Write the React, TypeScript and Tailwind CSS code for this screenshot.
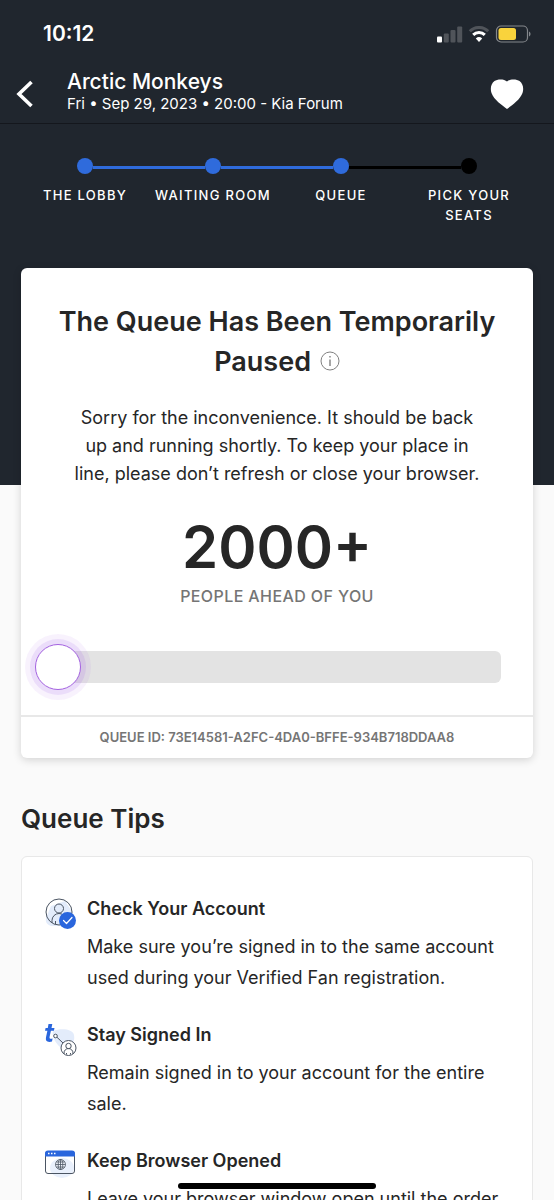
import type { ReactNode } from "react";

type Step = { label: string; done: boolean };

const steps: Step[] = [
  { label: "The Lobby", done: true },
  { label: "Waiting Room", done: true },
  { label: "Queue", done: true },
  { label: "Pick Your Seats", done: false },
];

const tips: { title: string; text: string; icon: ReactNode }[] = [
  {
    title: "Check Your Account",
    text: "Make sure you’re signed in to the same account used during your Verified Fan registration.",
    icon: <AccountIcon />,
  },
  {
    title: "Stay Signed In",
    text: "Remain signed in to your account for the entire sale.",
    icon: <SignedInIcon />,
  },
  {
    title: "Keep Browser Opened",
    text: "Leave your browser window open until the order",
    icon: <BrowserIcon />,
  },
];

function AccountIcon() {
  return (
    <svg viewBox="0 0 32 32" className="w-8 h-8" fill="none" aria-hidden="true">
      <path d="M1 20 6 8l14-5 8 12-10 13H6c-3-1-6-3-5-8z" fill="#e3ecfb" />
      <circle cx="14" cy="14" r="13" stroke="#4b5563" />
      <circle cx="14" cy="10.5" r="4.5" stroke="#4b5563" />
      <path d="M7 25v-2.500a7 7 0 0 1 14 0V25M10.500 26v-3" stroke="#4b5563" />
      <circle cx="22.500" cy="22.500" r="8.500" fill="#2a66dd" />
      <path d="m18.500 22.500 3 3 5.500-6" stroke="#fff" strokeWidth="1.200" strokeLinecap="round" strokeLinejoin="round" />
    </svg>
  );
}

function SignedInIcon() {
  return (
    <svg viewBox="0 0 32 32" className="w-8 h-8" fill="none" aria-hidden="true">
      <path d="M8 7c8-3 20-2 21 4 1 5-1 8-3 12l-9 1C12 22 6 12 8 7z" fill="#e3ecfb" />
      <path
        d="M3.500 0h3.800l-.8 4h3l-.6 2.800h-3l-1.300 6c-.3 1.500.2 2 1.300 2 .6 0 1.200-.1 1.700-.3l-.6 3c-.8.300-1.700.400-2.600.400-3 0-4-1.700-3.400-4.600l1.400-6.500H0L.6 4h2.200z"
        fill="#2a66dd"
      />
      <circle cx="10.500" cy="12" r="1.800" fill="#fff" stroke="#4b5563" />
      <path d="m12 13.300 6 5.700" stroke="#4b5563" />
      <circle cx="23.500" cy="24" r="7.500" fill="#fff" stroke="#4b5563" />
      <circle cx="23.500" cy="22" r="2.700" stroke="#4b5563" />
      <path d="M19 30v-1a4.500 4.500 0 0 1 9 0v1M21.500 30.500V29M25.500 30.500V29" stroke="#4b5563" />
    </svg>
  );
}

function BrowserIcon() {
  return (
    <svg viewBox="0 0 32 32" className="w-8 h-8" fill="none" aria-hidden="true">
      <ellipse cx="17" cy="18" rx="12" ry="10" fill="#e9f0fc" />
      <rect x=".5" y="1.500" width="29" height="22" rx="2.500" stroke="#4b5563" />
      <path d="M0 6.500V3.500a3 3 0 0 1 3-3h24a3 3 0 0 1 3 3v3z" fill="#2a66dd" />
      <path d="M3 3.500h1.500M6 3.500h1.500M9 3.500h1.500" stroke="#fff" strokeWidth="1.500" />
      <g stroke="#4b5563" strokeWidth=".8">
        <circle cx="15.500" cy="14.500" r="5" fill="#f1f5fd" />
        <ellipse cx="15.500" cy="14.500" rx="2.300" ry="5" />
        <path d="M15.500 9.500v10M10.500 14.500h10M11.300 12h8.400M11.300 17h8.400" />
      </g>
    </svg>
  );
}

function StatusBar() {
  return (
    <div className="flex items-center justify-between h-[68px] pl-[43px] pr-[23px]">
      <span className="text-[21px] font-semibold">10:12</span>
      <div className="flex items-center gap-[5px]">
        <svg viewBox="0 0 26 17" className="w-[26px] h-[17px]" aria-label="Signal">
          <rect x="0" y="10.500" width="5" height="6" rx="1" fill="#fff" />
          <rect x="6.800" y="7.500" width="5" height="9" rx="1" fill="#50545a" />
          <rect x="13.500" y="4" width="5" height="12.500" rx="1" fill="#50545a" />
          <rect x="20.200" y="0.500" width="5" height="16" rx="1" fill="#50545a" />
        </svg>
        <svg viewBox="0 0 22 17" className="w-[22px] h-[17px]" fill="none" aria-label="Wi-Fi">
          <path d="M1.800 5.300a13 13 0 0 1 18.400 0" stroke="#50545a" strokeWidth="3" />
          <path d="M5.200 8.900a8.300 8.300 0 0 1 11.600 0" stroke="#fff" strokeWidth="3" />
          <path d="M7.800 12.600a4.700 4.700 0 0 1 6.400 0L11 16z" fill="#fff" />
        </svg>
        <svg viewBox="0 0 36 18" className="w-9 h-[18px]" fill="none" aria-label="Battery">
          <rect x="1.500" y="1" width="31" height="16" rx="4.500" stroke="#84878c" strokeWidth="1.200" />
          <rect x="3.500" y="3" width="17.500" height="12" rx="2.500" fill="#f9d33c" />
          <path d="M34 6.500c2 .7 2 4.300 0 5z" fill="#84878c" />
        </svg>
      </div>
    </div>
  );
}

function EventHeader() {
  return (
    <header className="flex items-center h-14 pl-4 pr-[30px] pb-1 border-b border-[#14171d]">
      <button type="button" aria-label="Back" className="w-[51px] cursor-pointer">
        <svg viewBox="0 0 18 28" className="w-[18px] h-7" fill="none">
          <path d="M15.500 2 3 14l12.500 12" stroke="#fff" strokeWidth="3.600" />
        </svg>
      </button>
      <div className="flex-1 pb-1">
        <h1 className="text-[21px] leading-6 font-medium">Arctic Monkeys</h1>
        <p className="text-[15px] leading-5">Fri • Sep 29, 2023 • 20:00 - Kia Forum</p>
      </div>
      <button type="button" aria-label="Favourite" className="cursor-pointer">
        <svg viewBox="0 0 34 30" className="w-[34px] h-[30px]">
          <path
            d="M17 2.500C20-.5 27 0 29.500 2 33 4.500 34 9.500 32.500 14 30 21 22 26 17 30 12 26 4 21 1.500 14 0 9.500 1 4.500 4.500 2 7 0 14-.5 17 2.500z"
            fill="#fff"
          />
        </svg>
      </button>
    </header>
  );
}

function Stepper() {
  return (
    <ol className="grid grid-cols-4 px-[21px] pt-[34px]">
      {steps.map((step, i) => {
        const next = steps[i + 1];
        return (
          <li key={step.label} className="flex flex-col items-center text-center">
            <div className="flex items-center self-stretch h-4">
              <span
                className={`flex-1 h-[3px] mt-0.5 ${i === 0 ? "" : step.done ? "bg-[#2f6bdc]" : "bg-black"}`}
              />
              <span className={`w-4 h-4 rounded-full ${step.done ? "bg-[#2f6bdc]" : "bg-black"}`} />
              <span
                className={`flex-1 h-[3px] mt-0.5 ${!next ? "" : next.done ? "bg-[#2f6bdc]" : "bg-black"}`}
              />
            </div>
            <span className="mt-[11px] px-0.5 text-[13px] leading-5 font-medium uppercase tracking-widest">
              {step.label}
            </span>
          </li>
        );
      })}
    </ol>
  );
}

function QueueCard() {
  return (
    <section className="bg-white rounded-md shadow-[0_2px_8px_rgba(0,0,0,0.16)] text-center">
      <div className="px-8 pt-[34px] pb-8">
        <h2 className="text-[27px] leading-10 font-semibold">
          The Queue Has Been Temporarily Paused{" "}
          <button type="button" aria-label="More information" className="ml-0.5 pb-1 cursor-pointer">
            <svg viewBox="0 0 20 20" className="w-5 h-5" fill="none" stroke="#808080">
              <circle cx="10" cy="10" r="9" />
              <path d="M10 8.500V15M10 5v1.500" strokeWidth="1.400" />
            </svg>
          </button>
        </h2>
        <p className="mt-[22px] px-4 text-lg leading-7">
          Sorry for the inconvenience. It should be back up and running shortly. To keep your place in line, please
          don’t refresh or close your browser.
        </p>
        <p className="mt-[29px] text-[58px] leading-[60px] font-semibold">2000+</p>
        <p className="mt-[7px] text-base leading-6 font-medium tracking-wide text-[#757575] uppercase">
          People ahead of you
        </p>
        <div
          role="progressbar"
          aria-label="Queue progress"
          aria-valuenow={0}
          aria-valuemin={0}
          aria-valuemax={100}
          className="relative mt-[43px] h-8 rounded-md bg-[#e3e3e3]"
        >
          <span className="absolute -left-[18px] -top-[7px] w-[46px] h-[46px] rounded-full bg-white border border-[#a463e0] shadow-[0_0_0_5px_rgba(150,70,230,0.12),0_0_0_10px_rgba(150,70,230,0.07)]" />
        </div>
      </div>
      <p className="border-t-2 border-[#e8e8e8] pt-2.5 pb-[11px] text-[13px] leading-5 font-semibold text-[#757575]">
        QUEUE ID: 73E14581-A2FC-4DA0-BFFE-934B718DDAA8
      </p>
    </section>
  );
}

export default function App() {
  return (
    <div className="min-h-screen bg-[#fafafa] font-['Inter',sans-serif] text-[#262626]">
      <div className="bg-[#20262e] text-white pb-[260px]">
        <StatusBar />
        <EventHeader />
        <Stepper />
      </div>

      <main className="-mt-[217px] px-[21px]">
        <QueueCard />

        <h2 className="mt-[41px] text-[26px] leading-10 font-semibold">Queue Tips</h2>
        <ul className="mt-[17px] pl-[23px] pr-6 pt-[38px] pb-8 space-y-7 bg-white border border-[#e8e8e8] rounded-md">
          {tips.map((tip) => (
            <li key={tip.title} className="flex gap-2.5">
              <div className="w-8 shrink-0 pt-[3px]">{tip.icon}</div>
              <div>
                <h3 className="text-lg leading-7 font-semibold">{tip.title}</h3>
                <p className="mt-2 text-lg leading-[31px]">{tip.text}</p>
              </div>
            </li>
          ))}
        </ul>
      </main>

      <div className="fixed bottom-[11px] inset-x-0 mx-auto w-[198px] h-1.5 rounded-full bg-black" />
    </div>
  );
}
